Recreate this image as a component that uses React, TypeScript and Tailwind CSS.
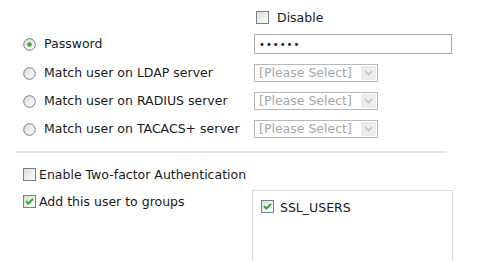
import React from "react"

function Radio({ checked = false }: { checked?: boolean }) {
  return (
    <svg width="13" height="13" viewBox="0 0 13 13" className="shrink-0">
      <defs>
        <linearGradient id="rg" x1="0" y1="0" x2="1" y2="1">
          <stop offset="0" stopColor="#dcdcd6" />
          <stop offset="1" stopColor="#ffffff" />
        </linearGradient>
      </defs>
      <circle cx="6.5" cy="6.5" r="5.8" fill="url(#rg)" stroke="#6d7f91" strokeWidth="1" />
      {checked && <circle cx="6.5" cy="6.5" r="2.3" fill="#3ea63e" />}
    </svg>
  )
}

function Check({ checked = false }: { checked?: boolean }) {
  return (
    <svg width="13" height="13" viewBox="0 0 13 13" className="shrink-0">
      <defs>
        <linearGradient id="cg" x1="0" y1="0" x2="1" y2="1">
          <stop offset="0" stopColor="#dcdcd6" />
          <stop offset="1" stopColor="#ffffff" />
        </linearGradient>
      </defs>
      <rect x="0.5" y="0.5" width="12" height="12" fill="url(#cg)" stroke="#6f8294" />
      {checked && (
        <path d="M3 6.2 L5.3 8.6 L10 3.8" fill="none" stroke="#26a326" strokeWidth="1.8" />
      )}
    </svg>
  )
}

function Select() {
  return (
    <div className="flex h-[18px] w-[124px] items-center border border-[#b4b9bd] bg-white">
      <span className="flex-1 pl-[4px] leading-none text-[#a7a7a7]">[Please Select]</span>
      <span className="mr-[1px] flex h-[14px] w-[15px] items-center justify-center bg-[#ececec]">
        <svg width="9" height="6" viewBox="0 0 9 6">
          <path d="M1 1 L4.5 4.5 L8 1" fill="none" stroke="#c2c2c2" strokeWidth="1.6" />
        </svg>
      </span>
    </div>
  )
}

export default function App() {
  const rows = [
    "Match user on LDAP server",
    "Match user on RADIUS server",
    "Match user on TACACS+ server",
  ]
  return (
    <div
      className="h-[261px] w-[496px] overflow-hidden bg-white text-[12.5px] text-[#1a1a1a]"
      style={{ fontFamily: '"DejaVu Sans", Verdana, sans-serif' }}
    >
      <div className="pl-[23px]">
        <div className="mt-[11px] flex h-[13px] items-center">
          <div className="w-[233px]" />
          <Check />
          <span className="ml-[8px] pt-[2px] leading-none">Disable</span>
        </div>

        <div className="mt-[10px] flex h-[20px] items-center">
          <div className="flex w-[231px] items-center">
            <Radio checked />
            <span className="ml-[8px] leading-none">Password</span>
          </div>
          <div className="flex h-[20px] w-[198px] items-center border border-[#a5acb2] pl-[4px] text-[10px] tracking-[1px]">
            ••••••
          </div>
        </div>

        {rows.map((label) => (
          <div key={label} className="mt-[10px] flex h-[18px] items-center">
            <div className="flex w-[231px] items-center">
              <Radio />
              <span className="ml-[8px] leading-none">{label}</span>
            </div>
            <Select />
          </div>
        ))}
      </div>

      <div className="ml-[16px] mt-[13px] h-[2px] w-[431px] bg-[#e2e2e2]" />

      <div className="pl-[23px]">
        <div className="mt-[15px] flex h-[13px] items-center">
          <Check />
          <span className="ml-[3px] pt-[2px] leading-none">Enable Two-factor Authentication</span>
        </div>

        <div className="mt-[9px] flex items-start">
          <div className="flex w-[229px] items-center pt-[4px]">
            <Check checked />
            <span className="ml-[3px] pt-[2px] leading-none">Add this user to groups</span>
          </div>
          <div className="h-[90px] w-[201px] border border-[#d8d8d8] pl-[8px] pt-[8px]">
            <div className="flex items-center">
              <Check checked />
              <span className="ml-[6px] pt-[3px] leading-none">SSL_USERS</span>
            </div>
          </div>
        </div>
      </div>
    </div>
  )
}
